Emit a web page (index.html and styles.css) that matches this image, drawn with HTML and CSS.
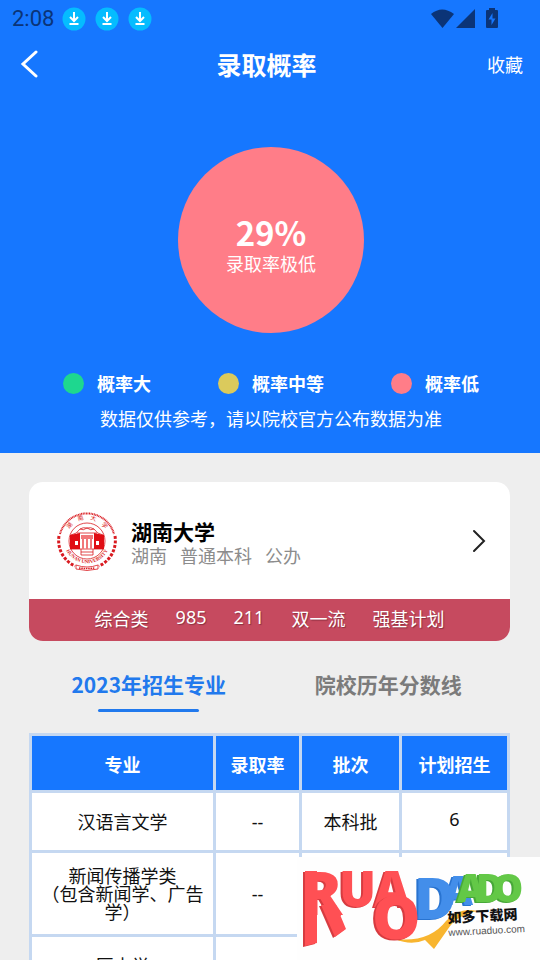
FILE: index.html
```html
<!DOCTYPE html>
<html lang="zh-CN">
<head>
<meta charset="utf-8">
<meta name="viewport" content="width=device-width, initial-scale=1">
<title>录取概率</title>
<link rel="stylesheet" href="styles.css">
</head>
<body>
<header class="hero">
  <div class="status">
    <span class="clock">2:08</span>
    <svg class="download" viewBox="0 0 24 24" aria-hidden="true"><circle cx="12" cy="12" r="11.500" fill="#05bcff"/><path d="M12 5v9M8 10l4 4 4-4M7.500 17h9" fill="none" stroke="#fff" stroke-width="2"/></svg>
    <svg class="download" viewBox="0 0 24 24" aria-hidden="true"><circle cx="12" cy="12" r="11.500" fill="#05bcff"/><path d="M12 5v9M8 10l4 4 4-4M7.500 17h9" fill="none" stroke="#fff" stroke-width="2"/></svg>
    <svg class="download" viewBox="0 0 24 24" aria-hidden="true"><circle cx="12" cy="12" r="11.500" fill="#05bcff"/><path d="M12 5v9M8 10l4 4 4-4M7.500 17h9" fill="none" stroke="#fff" stroke-width="2"/></svg>
    <svg class="signals" viewBox="0 0 68 22" aria-hidden="true">
      <g fill="#0b3477">
        <path d="M0 6Q11-3 23 6L11.500 20z"/>
        <path d="M44 1v19H25z"/>
        <path d="M58 0h6v2h2q1 0 1 1v16q0 1-1 1H56q-1 0-1-1V3q0-1 1-1h2z"/>
      </g>
      <path d="M61.500 5l-4 6.500h3V17l4-6.500h-3z" fill="#1677ff"/>
    </svg>
  </div>
  <nav class="topbar">
    <button class="back" type="button" aria-label="返回"><svg viewBox="0 0 18 28" aria-hidden="true"><path d="M16 2L3 14l13 12" fill="none" stroke="#fff" stroke-width="3" stroke-linecap="round"/></svg></button>
    <h1 class="title">录取概率</h1>
    <button class="favorite" type="button">收藏</button>
  </nav>
  <div class="gauge">
    <strong class="percent">29%</strong>
    <span class="verdict">录取率极低</span>
  </div>
  <ul class="legend">
    <li><i class="dot high"></i>概率大</li>
    <li><i class="dot medium"></i>概率中等</li>
    <li><i class="dot low"></i>概率低</li>
  </ul>
  <p class="note">数据仅供参考，请以院校官方公布数据为准</p>
</header>

<main class="content">
  <section class="school">
    <a class="school-link" href="#school">
      <svg class="seal" viewBox="0 0 60 60" aria-hidden="true">
        <defs>
          <path id="seal-top" d="M10 23A21 21 0 0 1 50 23"/>
          <path id="seal-bottom" d="M8 36A23 23 0 0 0 52 36"/>
        </defs>
        <g fill="none" stroke="#d91a20">
          <path d="M3 23A28 28 0 0 1 57 23" stroke-width="2" stroke-dasharray="1 .6"/>
          <path d="M2 25A28 28 0 0 0 18 55" stroke-width="3" stroke-dasharray="3 1.500"/>
          <path d="M58 25A28 28 0 0 1 42 55" stroke-width="3" stroke-dasharray="3 1.500"/>
          <circle cx="30" cy="30" r="18" stroke-width=".8"/>
          <path d="M14 24q6-1 9-6 3-2 7-1 4-1 7 1 3 5 9 6M23 18q3 2 7-1 4 3 7 1M20 22h20M13 38h34M24 41h12M24 44h12M24 38v6M36 38v6" stroke-width=".8"/>
          <path d="M19 54q11 4 22 0v4q-11 3-22 0z" stroke-width=".8"/>
          <path d="M22 57q8 1 16 0" stroke-width="1.500" stroke-dasharray="1.500 .8"/>
        </g>
        <path d="M13 24l10-2v16H13zM37 22l10 2v14H37z" fill="#e00d14"/>
        <path d="M18 30h3v4h-3zM39 30h3v4h-3z" fill="#fff"/>
        <path d="M24 24h12v4H24zM25 28h2v10h-2zM29 28h2v10h-2zM33 28h2v10h-2z" fill="#f1777a"/>
        <text class="seal-name"><textPath href="#seal-top" startOffset="50%" text-anchor="middle">湖　南　大　学</textPath></text>
        <text class="seal-latin"><textPath href="#seal-bottom" startOffset="50%" text-anchor="middle">HUNAN UNIVERSITY</textPath></text>
      </svg>
      <span class="school-info">
        <strong class="school-name">湖南大学</strong>
        <span class="school-meta"><span>湖南</span><span>普通本科</span><span>公办</span></span>
      </span>
      <svg class="chevron" viewBox="0 0 14 24" aria-hidden="true"><path d="M2 2l10 10L2 22" fill="none" stroke="#222" stroke-width="2" stroke-linecap="round"/></svg>
    </a>
    <ul class="tags"><li>综合类</li><li>985</li><li>211</li><li>双一流</li><li>强基计划</li></ul>
  </section>

  <div class="tabs" role="tablist">
    <button class="tab active" type="button" role="tab" aria-selected="true">2023年招生专业</button>
    <button class="tab" type="button" role="tab" aria-selected="false">院校历年分数线</button>
  </div>

  <table class="majors">
    <colgroup><col class="col-major"><col class="col-rate"><col class="col-batch"><col></colgroup>
    <thead><tr><th>专业</th><th>录取率</th><th>批次</th><th>计划招生</th></tr></thead>
    <tbody>
      <tr><td>汉语言文学</td><td>--</td><td>本科批</td><td class="plan">6</td></tr>
      <tr><td>新闻传播学类<br>（包含新闻学、广告学）</td><td>--</td><td></td><td></td></tr>
      <tr><td>历史学</td><td></td><td></td><td></td></tr>
    </tbody>
  </table>
</main>

<aside class="watermark">
  <svg viewBox="0 0 243 103" role="img" aria-label="如多下载网">
    <g class="brand-red">
      <path d="M8 14h12v72l-12 3zM24 48h15l10 24-11 8z"/>
      <text x="4" y="58" font-size="61">R</text>
      <text x="42" y="50" font-size="49">U</text>
      <text x="77" y="50" font-size="49">A</text>
    </g>
    <g class="brand-blue">
      <text x="117" y="62" font-size="57">D</text>
      <text x="147" y="48" font-size="40">A</text>
    </g>
    <g class="brand-green">
      <text x="160" y="45" font-size="38">A</text>
      <text x="179" y="45" font-size="38">D</text>
      <text x="196" y="45" font-size="38">O</text>
    </g>
    <path d="M98 82q34 4 51-18 13-14 31-10-20 4-29 18l-14 20-9-9q-14 6-30-1" fill="#f8b52f"/>
    <g class="brand-red"><text x="75" y="82" font-size="61">O</text></g>
    <g transform="rotate(-3 151 70)">
      <text class="site-name" x="151" y="66">如多下载网</text>
      <text class="site-url" x="151" y="79">www.ruaduo.com</text>
    </g>
  </svg>
</aside>
</body>
</html>
```
FILE: styles.css
```css
* { box-sizing: border-box; }

body {
  margin: 0;
  height: 100vh;
  overflow: hidden;
  position: relative;
  background: #eee;
  color: #111;
  font-family: "Noto Sans CJK SC", sans-serif;
  font-size: 18px;
  line-height: 26px;
}

button {
  border: 0;
  padding: 0;
  background: none;
  color: inherit;
  font: inherit;
}

ul { margin: 0; padding: 0; list-style: none; }

.hero {
  display: flex;
  flex-direction: column;
  align-items: center;
  padding: 0 0 22px 2px;
  background: #1677ff;
  color: #fff;
}

.status {
  display: flex;
  align-items: center;
  align-self: stretch;
  gap: 9px;
  height: 37px;
  padding: 0 41px 0 10px;
}

.clock {
  width: 41px;
  color: #0b3477;
  font-family: Roboto, sans-serif;
  font-size: 22px;
}

.download { width: 24px; height: 24px; }
.signals { width: 68px; height: 22px; margin-left: auto; }

.topbar {
  display: grid;
  grid-template-columns: 26px 1fr auto;
  align-items: center;
  align-self: stretch;
  height: 54px;
  padding: 0 17px 0 18px;
}

.back { justify-self: start; width: 18px; height: 28px; }
.back svg, .watermark svg { display: block; width: 100%; }
.title { margin: 0; font-size: 25px; font-weight: 700; line-height: 36px; text-align: center; }

.gauge {
  display: flex;
  flex-direction: column;
  align-items: center;
  justify-content: center;
  width: 186px;
  height: 186px;
  margin-top: 56px;
  border-radius: 50%;
  background: #ff7d88;
}

.percent { margin-top: 10px; font-size: 33px; line-height: 36px; font-weight: 700; }

.legend {
  display: flex;
  justify-content: center;
  gap: 67px;
  margin-top: 37px;
  font-weight: 700;
}

.legend li { display: flex; align-items: center; gap: 13px; }
.dot { width: 21px; height: 21px; border-radius: 50%; }
.high { background: #1ed78f; }
.medium { background: #dbca5c; }
.low { background: #ff7d88; }
.note { margin: 9px 0 0; }

.content { padding: 29px 30px 0 29px; }

.school { overflow: hidden; border-radius: 14px; background: #fff; }

.school-link {
  display: flex;
  align-items: center;
  gap: 14px;
  height: 117px;
  padding: 0 24px 0 28px;
  color: inherit;
  text-decoration: none;
}

.seal { width: 60px; height: 60px; }
.seal-name { fill: #d91a20; font-size: 6px; }
.seal-latin { fill: #d91a20; font: bold 5px "Liberation Serif", serif; }
.school-info { display: flex; flex-direction: column; padding-top: 4px; }
.school-name { color: #000; font-size: 21px; line-height: 24px; }
.school-meta { display: flex; gap: 13px; color: #8c8c8c; line-height: 24px; }
.chevron { width: 14px; height: 24px; margin-left: auto; }

.tags {
  display: flex;
  justify-content: center;
  gap: 27px;
  height: 42px;
  padding-top: 6px;
  background: #c64a5f;
  color: #fff;
  font-family: "Noto Sans", "Noto Sans CJK SC", sans-serif;
  line-height: normal;
  text-shadow: 1px 1px 1px #8a3040;
}

.tabs { display: flex; margin: 28px 2px 21px 0; }

.tab {
  display: flex;
  flex: 1;
  flex-direction: column;
  align-items: center;
  gap: 10px;
  height: 43px;
  color: #7b7b7b;
  font-size: 21px;
  font-weight: 700;
  line-height: 30px;
}

.tab.active { color: #2179ed; }

.tab.active::after {
  content: "";
  width: 101px;
  height: 3px;
  border-radius: 2px;
  background: #2179ed;
}

.majors {
  width: 100%;
  table-layout: fixed;
  border-collapse: separate;
  border-spacing: 3px;
  background: #c5d8f1;
  font-family: "Noto Sans", "Noto Sans CJK SC", sans-serif;
  line-height: 18px;
  text-align: center;
}

.col-major { width: 181px; }
.col-rate { width: 83px; }
.col-batch { width: 97px; }
.majors th, .majors td { padding: 0 8px; }
.majors th { height: 54px; padding: 4px 0 0; background: #1677ff; color: #fff; }
.majors td { height: 57px; background: #fff; }
.majors .plan { padding-bottom: 6px; }
.majors tr:nth-child(2) td { height: 81px; }

.watermark {
  position: absolute;
  right: 0;
  bottom: 0;
  width: 243px;
  background: #fefefe;
}

.brand-red text, .brand-blue text, .brand-green text {
  font-family: "Open Sans", sans-serif;
  font-weight: 800;
}

.brand-red { fill: #ff5054; filter: drop-shadow(-2px 1px 0 #d73b40); }
.brand-blue { fill: #438eea; filter: drop-shadow(-2px 1px 0 #2873d0); }
.brand-green { fill: #63c847; filter: drop-shadow(-2px 1px 0 #47a838); }
.site-name { fill: #111; font-size: 14px; font-weight: 900; }
.site-url { fill: #555; font: 10px "Liberation Sans", sans-serif; }
```
